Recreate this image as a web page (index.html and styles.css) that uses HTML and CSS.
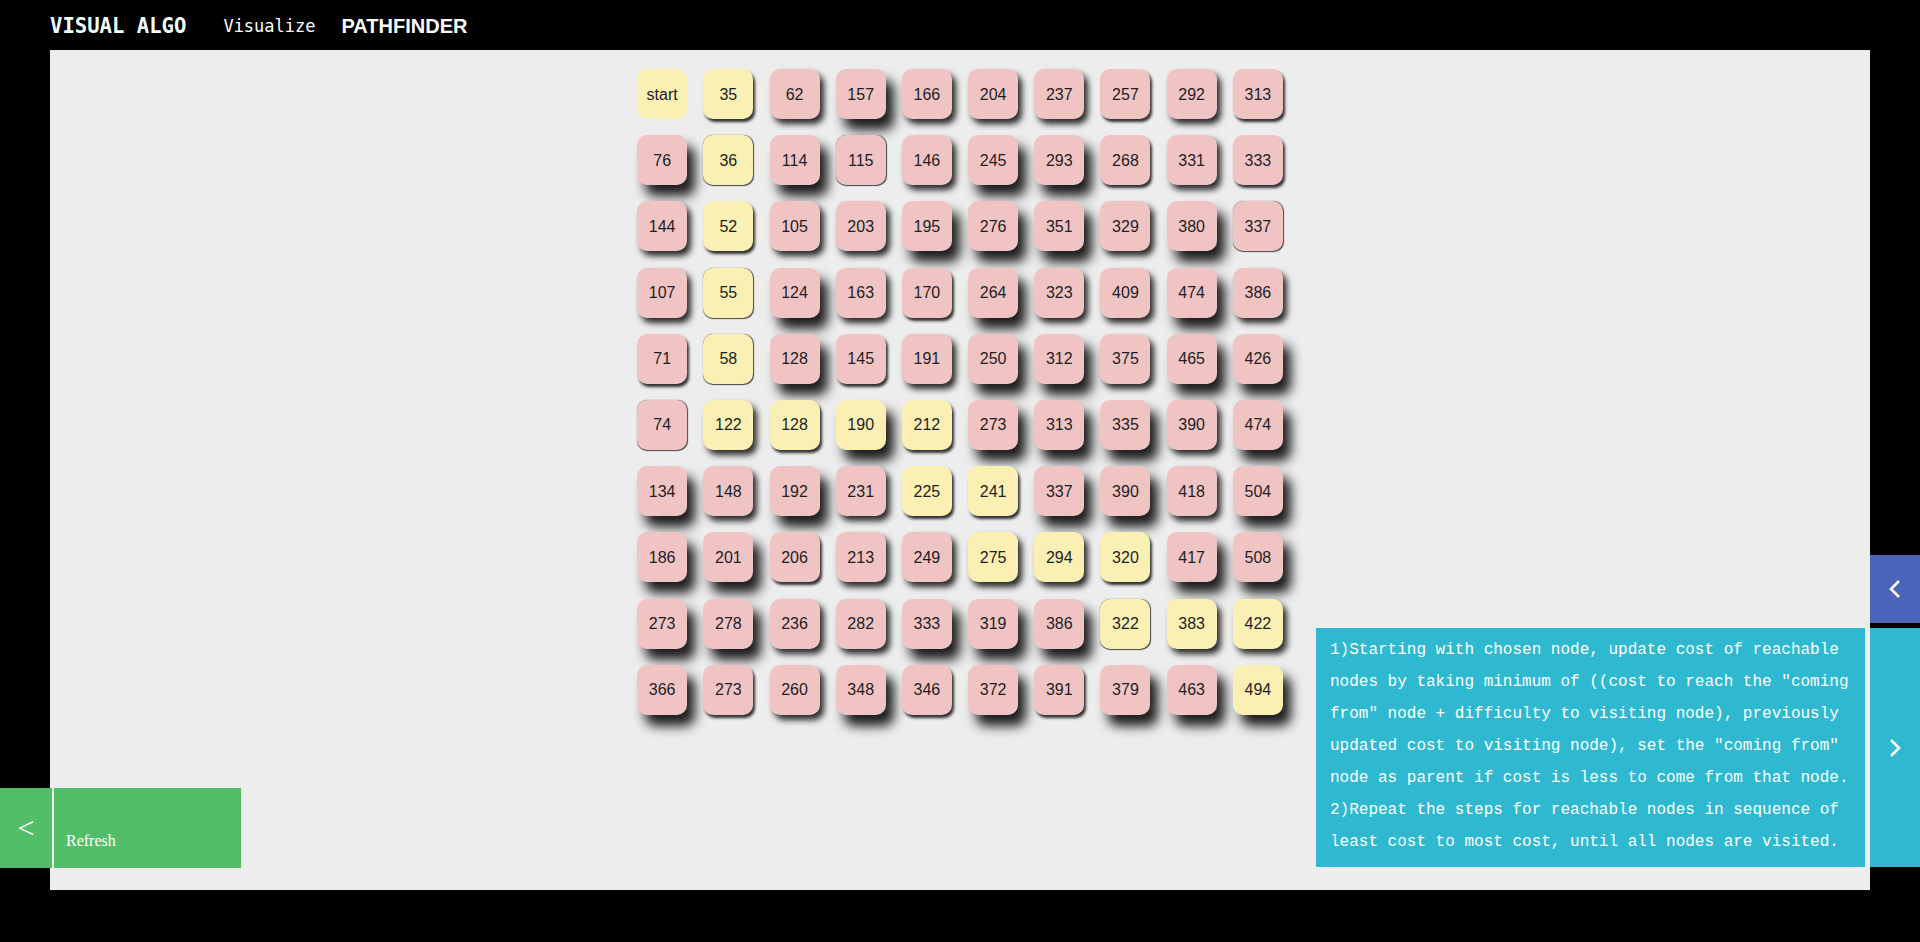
FILE: index.html
```html
<!DOCTYPE html>
<html lang="en">
<head>
    <meta charset="UTF-8">
    <meta name="viewport" content="width=device-width, initial-scale=1.0">
    <title>Visual Algo - Pathfinder</title>
    <link rel="stylesheet" href="styles.css">
</head>
<body>
    <header class="topbar">
        <span class="brand">VISUAL ALGO</span>
        <span class="nav-link">Visualize</span>
        <span class="page-title">PATHFINDER</span>
    </header>

    <main class="board">
        <div class="grid">
            <div class="node y sh-n">start</div><div class="node y sh-s">35</div><div class="node p sh-m">62</div><div class="node p sh-l">157</div><div class="node p sh-m">166</div><div class="node p sh-m">204</div><div class="node p sh-m">237</div><div class="node p sh-s">257</div><div class="node p sh-m">292</div><div class="node p sh-s">313</div>
            <div class="node p sh-l">76</div><div class="node y sh-b">36</div><div class="node p sh-l">114</div><div class="node p sh-b">115</div><div class="node p sh-m">146</div><div class="node p sh-l">245</div><div class="node p sh-l">293</div><div class="node p sh-s">268</div><div class="node p sh-m">331</div><div class="node p sh-s">333</div>
            <div class="node p sh-m">144</div><div class="node y sh-s">52</div><div class="node p sh-m">105</div><div class="node p sh-m">203</div><div class="node p sh-l">195</div><div class="node p sh-l">276</div><div class="node p sh-l">351</div><div class="node p sh-m">329</div><div class="node p sh-l">380</div><div class="node p sh-b">337</div>
            <div class="node p sh-m">107</div><div class="node y sh-b">55</div><div class="node p sh-l">124</div><div class="node p sh-m">163</div><div class="node p sh-s">170</div><div class="node p sh-l">264</div><div class="node p sh-m">323</div><div class="node p sh-m">409</div><div class="node p sh-l">474</div><div class="node p sh-m">386</div>
            <div class="node p sh-s">71</div><div class="node y sh-b">58</div><div class="node p sh-l">128</div><div class="node p sh-s">145</div><div class="node p sh-m">191</div><div class="node p sh-l">250</div><div class="node p sh-l">312</div><div class="node p sh-m">375</div><div class="node p sh-l">465</div><div class="node p sh-l">426</div>
            <div class="node p sh-b">74</div><div class="node y sh-m">122</div><div class="node y sh-s">128</div><div class="node y sh-l">190</div><div class="node y sh-s">212</div><div class="node p sh-l">273</div><div class="node p sh-l">313</div><div class="node p sh-l">335</div><div class="node p sh-m">390</div><div class="node p sh-l">474</div>
            <div class="node p sh-l">134</div><div class="node p sh-m">148</div><div class="node p sh-l">192</div><div class="node p sh-m">231</div><div class="node y sh-s">225</div><div class="node y sh-s">241</div><div class="node p sh-l">337</div><div class="node p sh-l">390</div><div class="node p sh-m">418</div><div class="node p sh-l">504</div>
            <div class="node p sh-l">186</div><div class="node p sh-l">201</div><div class="node p sh-s">206</div><div class="node p sh-m">213</div><div class="node p sh-m">249</div><div class="node y sh-m">275</div><div class="node y sh-m">294</div><div class="node y sh-s">320</div><div class="node p sh-l">417</div><div class="node p sh-l">508</div>
            <div class="node p sh-l">273</div><div class="node p sh-l">278</div><div class="node p sh-m">236</div><div class="node p sh-m">282</div><div class="node p sh-l">333</div><div class="node p sh-l">319</div><div class="node p sh-l">386</div><div class="node y sh-b">322</div><div class="node y sh-m">383</div><div class="node y sh-m">422</div>
            <div class="node p sh-l">366</div><div class="node p sh-s">273</div><div class="node p sh-m">260</div><div class="node p sh-l">348</div><div class="node p sh-s">346</div><div class="node p sh-l">372</div><div class="node p sh-s">391</div><div class="node p sh-l">379</div><div class="node p sh-l">463</div><div class="node y sh-l">494</div>
        </div>
    </main>

    <!-- left control tab -->
    <div class="controls">
        <div class="ctrl-toggle">&lt;</div>
        <div class="ctrl-body">Refresh</div>
    </div>

    <!-- right side tabs -->
    <div class="tab tab-blue">
        <svg width="14" height="20" viewBox="0 0 14 20"><polyline points="11,2 3,10 11,18" fill="none" stroke="#fff" stroke-width="2.6"/></svg>
    </div>
    <div class="drawer">
        <div class="drawer-text">
            1)Starting with chosen node, update cost of reachable nodes by taking minimum of ((cost to reach the "coming from" node + difficulty to visiting node), previously updated cost to visiting node), set the "coming from" node as parent if cost is less to come from that node.<br>
            2)Repeat the steps for reachable nodes in sequence of least cost to most cost, until all nodes are visited.
        </div>
        <div class="tab tab-teal">
            <svg width="14" height="20" viewBox="0 0 14 20"><polyline points="3,2 11,10 3,18" fill="none" stroke="#fff" stroke-width="2.6"/></svg>
        </div>
    </div>
</body>
</html>
```

FILE: styles.css
```css
body {
    margin: 0;
    background: #000;
    font-family: "Liberation Sans", Arial, sans-serif;
    width: 1920px;
    height: 942px;
    position: relative;
    overflow: hidden;
}
.topbar {
    height: 50px;
    box-sizing: border-box;
    display: flex;
    align-items: center;
    padding: 2px 0 0 50px;
    color: #fff;
}
.brand {
    font-family: "DejaVu Sans Mono", monospace;
    font-weight: bold;
    font-size: 20.6px;
    color: #f4ffff;
    margin-right: 37px;
}
.nav-link {
    font-family: "DejaVu Sans Mono", monospace;
    font-size: 17px;
    margin-right: 26px;
}
.page-title {
    font-weight: bold;
    font-size: 20px;
}
.board {
    background: #ededed;
    margin: 0 50px;
    height: 840px;
    padding-top: 19px;
    box-sizing: border-box;
}
.grid {
    display: grid;
    grid-template-columns: repeat(10, 50px);
    grid-auto-rows: 50px;
    gap: 16.2px;
    justify-content: center;
}
.node {
    border-radius: 10px;
    display: flex;
    align-items: center;
    justify-content: center;
    font-size: 16px;
    padding-top: 1px;
    box-sizing: border-box;
    color: #1e1e24;
}
.p { background: #f1c4c4; }
.y { background: #faf0b4; }
.sh-n { box-shadow: none; }
.sh-b { box-shadow: 0.5px 0.5px 1px #444; }
.sh-s { box-shadow: 2px 3px 3px #2e2e2e; }
.sh-m { box-shadow: 4px 5px 6px #282828; }
.sh-l { box-shadow: 8px 11px 12px #1c1c1c; }

.controls {
    position: absolute;
    left: 0;
    top: 788px;
    height: 80px;
    display: flex;
    gap: 2px;
}
.ctrl-toggle {
    width: 52px;
    background: #53be6a;
    color: #fff;
    font-family: "Liberation Serif", serif;
    font-size: 30px;
    display: flex;
    align-items: center;
    justify-content: center;
}
.ctrl-body {
    width: 175px;
    background: #53be6a;
    color: #fff;
    font-family: "Liberation Serif", serif;
    font-size: 16px;
    line-height: 20px;
    padding: 43px 0 0 12px;
}
.tab {
    width: 50px;
    display: flex;
    align-items: center;
    justify-content: center;
}
.tab-blue {
    position: absolute;
    right: 0;
    top: 555px;
    height: 68px;
    background: #4b63b8;
}
.tab-teal {
    background: #2eb9d1;
}
.drawer {
    position: absolute;
    right: 0;
    top: 628px;
    height: 239px;
    display: flex;
    gap: 5px;
}
.drawer-text {
    width: 549px;
    box-sizing: border-box;
    background: #2eb9d1;
    color: #fff;
    font-family: "Liberation Mono", "Courier New", monospace;
    font-size: 16px;
    line-height: 32px;
    padding: 6px 10px 0 14px;
}
```
